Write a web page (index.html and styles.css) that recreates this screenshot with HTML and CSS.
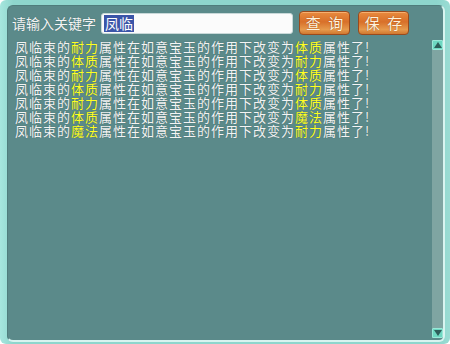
FILE: index.html
```html
<!DOCTYPE html>
<html>
<head>
<meta charset="utf-8">
<link rel="stylesheet" href="styles.css">
</head>
<body>
<div class="frame">
  <div class="panel">
    <div class="search">
      <span class="label">请输入关键字</span>
      <div class="input"><span class="sel">凤临</span></div>
      <button class="btn">查&nbsp;询</button>
      <button class="btn">保&nbsp;存</button>
    </div>
    <div class="body">
      <div class="log">
        <div class="line">凤临束的<b>耐力</b>属性在如意宝玉的作用下改变为<b>体质</b>属性了!</div>
        <div class="line">凤临束的<b>体质</b>属性在如意宝玉的作用下改变为<b>耐力</b>属性了!</div>
        <div class="line">凤临束的<b>耐力</b>属性在如意宝玉的作用下改变为<b>体质</b>属性了!</div>
        <div class="line">凤临束的<b>体质</b>属性在如意宝玉的作用下改变为<b>耐力</b>属性了!</div>
        <div class="line">凤临束的<b>耐力</b>属性在如意宝玉的作用下改变为<b>体质</b>属性了!</div>
        <div class="line">凤临束的<b>体质</b>属性在如意宝玉的作用下改变为<b>魔法</b>属性了!</div>
        <div class="line">凤临束的<b>魔法</b>属性在如意宝玉的作用下改变为<b>耐力</b>属性了!</div>
      </div>
      <div class="scroll">
        <div class="arrow up"><svg width="8" height="6" viewBox="0 0 8 6"><path d="M4 0 L8 6 L0 6 Z" fill="#2e5e5a"/></svg></div>
        <div class="track"></div>
        <div class="arrow down"><svg width="8" height="6" viewBox="0 0 8 6"><path d="M0 0 L8 0 L4 6 Z" fill="#2e5e5a"/></svg></div>
      </div>
    </div>
  </div>
</div>
</body>
</html>
```
FILE: styles.css
```css
html, body {
  margin: 0;
  padding: 0;
}
body {
  width: 450px;
  height: 344px;
  overflow: hidden;
  font-family: "Noto Sans CJK SC", "DejaVu Sans", sans-serif;
}
.frame {
  width: 450px;
  height: 344px;
  box-sizing: border-box;
  padding: 5px 5px 2px 7px;
  background: linear-gradient(90deg, #a6e6de 0%, #8ed6cd 3%, #8ed6cd 97%, #9adcd3 100%);
  border-radius: 6px;
}
.panel {
  height: 100%;
  box-sizing: border-box;
  background: #5b8a8a;
  border-radius: 6px;
  border-top: 1px solid #4f7d7c;
  border-left: 1px solid #4f7d7c;
  border-right: 2px solid #d8f4f0;
  border-bottom: 2px solid #d8f4f0;
  display: flex;
  flex-direction: column;
  padding: 5px 0 2px 4px;
}
.search {
  display: flex;
  align-items: center;
  height: 24px;
}
.label {
  color: #f4f4f4;
  font-size: 14px;
  width: 89px;
  text-shadow: 0 0 1px #3c6464;
}
.input {
  width: 188px;
  height: 19px;
  background: #fbfbfb;
  border: 1px solid #c8d8d8;
  border-radius: 3px;
  display: flex;
  align-items: center;
  padding-left: 2px;
  margin-right: 6px;
}
.sel {
  background: #3b55a8;
  color: #fff;
  font-size: 14px;
  line-height: 17px;
  padding: 0 1px;
}
.btn {
  width: 51px;
  height: 24px;
  margin-right: 8px;
  padding: 0;
  border: 1px solid #9a4a1c;
  border-radius: 4px;
  background: linear-gradient(180deg, #e88a3e 0%, #d8702a 45%, #e69a4c 80%, #d07830 100%);
  color: #fff3dc;
  font-family: "Noto Sans CJK SC", sans-serif;
  font-size: 15px;
  letter-spacing: 2px;
  text-indent: 2px;
  line-height: 22px;
  text-shadow: 0 0 1px #8a3a10;
  box-shadow: inset 0 1px 0 #f6b070;
}
.body {
  flex: 1;
  display: flex;
  margin-top: 5px;
}
.log {
  flex: 1;
  padding-left: 3px;
}
.line {
  color: #f4f4f4;
  font-size: 13px;
  letter-spacing: 1px;
  line-height: 14px;
  height: 14px;
  white-space: nowrap;
  text-shadow: 0 0 1px #3a5e5e;
}
.line b {
  font-weight: normal;
  color: #ffff22;
}
.scroll {
  width: 11px;
  display: flex;
  flex-direction: column;
  background: #7fa5a2;
}
.track {
  flex: 1;
}
.arrow {
  height: 10px;
  background: #6ed8c2;
  border: 1px solid #9ae8d8;
  box-sizing: border-box;
  display: flex;
  align-items: center;
  justify-content: center;
  border-radius: 1px;
}
```
